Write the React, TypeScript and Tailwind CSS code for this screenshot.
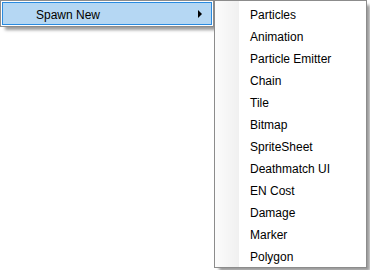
const items = [
  "Particles",
  "Animation",
  "Particle Emitter",
  "Chain",
  "Tile",
  "Bitmap",
  "SpriteSheet",
  "Deathmatch UI",
  "EN Cost",
  "Damage",
  "Marker",
  "Polygon",
]

export default function App() {
  return (
    <div
      className="flex h-[270px] w-[370px] items-start bg-white text-[12px] text-black"
      style={{ fontFamily: '"Liberation Sans", Arial, sans-serif' }}
    >
      {/* parent menu */}
      <div className="w-[214px] border border-[#8c8c8c] bg-white p-px shadow-[4px_4px_3px_-1px_rgba(0,0,0,0.4)]">
        <div className="flex h-[23px] items-center border border-[#2a8be0] bg-[#b5d7f3] pl-[33px] pr-[9px]">
          <span className="flex-1 pt-[2px] leading-none">Spawn New</span>
          <span className="h-0 w-0 border-y-[4px] border-l-[4px] border-y-transparent border-l-black" />
        </div>
      </div>

      {/* submenu */}
      <div className="h-[268px] w-[153px] border border-[#8c8c8c] bg-[linear-gradient(90deg,#fcfcfc_0px,#f0f0f0_24px,#ffffff_24px)] py-[2px] shadow-[4px_4px_3px_-1px_rgba(0,0,0,0.4)]">
        {items.map((label) => (
          <div key={label} className="flex h-[22px] items-center pl-[35px] pt-[2px] leading-none">
            {label}
          </div>
        ))}
      </div>
    </div>
  )
}
